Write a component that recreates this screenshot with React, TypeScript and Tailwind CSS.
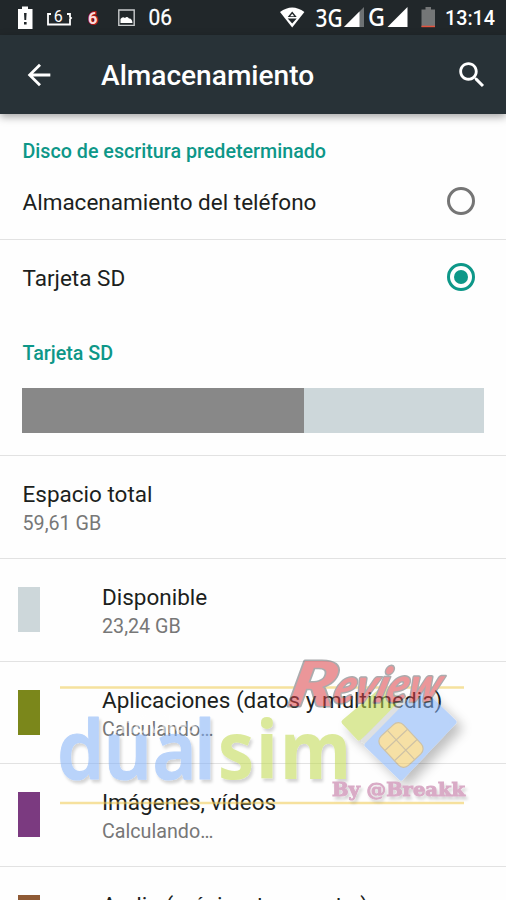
import clsx from 'clsx'

const rows = [
  { title: 'Disponible', detail: '23,24 GB', color: 'bg-[#cdd7da]' },
  { title: 'Aplicaciones (datos y multimedia)', detail: 'Calculando…', color: 'bg-[#7b871b]' },
  { title: 'Imágenes, vídeos', detail: 'Calculando…', color: 'bg-[#7b3a80]' },
  { title: 'Audio (música, tonos, etc.)', detail: 'Calculando…', color: 'bg-[#8f5a35]' },
]

function StatusBar() {
  return (
    <div className="h-[35px] bg-[#21272a] text-white">
      <svg width="506" height="35" viewBox="0 0 506 35" fill="#fff" fontFamily="Roboto, sans-serif">
        <path d="M18 9h4V6.5h6V9h4.500v20H18z" />
        <path d="M24 13h2.600l-.4 7h-1.800zM24 22h2.600v2.400H24z" fill="#21272a" />

        <path d="M51 14h-3v10.500h22V19l1-1-1-1v-3h-3" fill="none" stroke="#fff" strokeWidth="1.800" />
        <text x="53.800" y="21.500" fontSize="16">6</text>

        <text x="88" y="24" fontSize="16.500" fontWeight="700" fill="#fbdcdc" stroke="#b01818" strokeWidth="2" paintOrder="stroke">6</text>

        <path d="M118.800 10h15.400v15.400h-15.400z" fill="none" stroke="#c9cccd" strokeWidth="1.400" />
        <path d="M120.500 23v-4q2-3 4.500-1 2-2 4 .5 3-.5 3.500 4.500z" />
        <text x="148.500" y="25.400" fontSize="22" textLength="23.500" lengthAdjust="spacingAndGlyphs" stroke="#fff" strokeWidth="0.300">06</text>

        <path d="M280 12q12.200-9 24.400 0L292.200 27.400z" />
        <path d="M292.200 11.500l4.500 5.500h-9zM292.200 23.500l4.500-5h-9z" fill="#21272a" />
        <path d="M292.200 13.700l2 2.500h-4z" fill="#fff" />

        <text x="315.500" y="26.800" fontSize="24.500" fontWeight="500" fontFamily="'Noto Sans', sans-serif" textLength="27" lengthAdjust="spacingAndGlyphs">3G</text>
        <path d="M364 7v20h-20z" fill="#6d7173" />
        <path d="M359.500 11.500V27H344z" />
        <text x="368" y="26.400" fontSize="24.500" fontWeight="500" fontFamily="'Noto Sans', sans-serif" textLength="17" lengthAdjust="spacingAndGlyphs">G</text>
        <path d="M407.500 7v20h-20z" />

        <path d="M421.500 9.500h4V7h5.500v2.500h4V27h-13.500z" fill="#747677" />
        <path d="M421.500 25.700H435V27.200h-13.500z" fill="#e5533d" />
        <text x="445" y="25.400" fontSize="20" fontWeight="500" textLength="50" lengthAdjust="spacingAndGlyphs">13:14</text>
      </svg>
    </div>
  )
}

function AppBar() {
  return (
    <header className="relative z-10 flex h-[79px] items-center bg-[#283237] text-white shadow-[0_3px_8px_rgba(0,0,0,0.35)]">
      <svg className="ml-[22px] shrink-0" width="34" height="34" viewBox="0 0 24 24" fill="currentColor">
        <path d="M20 11H7.830l5.590-5.590L12 4l-8 8 8 8 1.410-1.410L7.830 13H20v-2z" />
      </svg>
      <h1 className="ml-[45px] mt-[4px] flex-1 text-[28.100px] font-medium leading-none">Almacenamiento</h1>
      <svg className="mr-[17px] shrink-0" width="34" height="34" viewBox="0 0 24 24" fill="currentColor">
        <path d="M15.500 14h-.79l-.28-.27C15.410 12.590 16 11.110 16 9.500 16 5.910 13.090 3 9.500 3S3 5.910 3 9.500 5.910 16 9.500 16c1.610 0 3.090-.59 4.230-1.570l.27.280v.79l5 4.990L20.490 19l-4.990-5zm-6 0C7.010 14 5 11.990 5 9.500S7.010 5 9.500 5 14 7.010 14 9.500 11.990 14 9.500 14z" />
      </svg>
    </header>
  )
}

function SectionTitle({ children }: { children: string }) {
  return <h2 className="px-[22.500px] text-[19.700px] font-medium leading-6 text-[#0d9788]">{children}</h2>
}

function RadioRow({ label, checked }: { label: string; checked?: boolean }) {
  return (
    <div className="flex h-[75px] items-center justify-between pb-[2px] pl-[22.500px] pr-[31px]">
      <span className="mt-[3px] text-[22.500px] leading-none">{label}</span>
      <span
        className={clsx(
          'flex size-7 items-center justify-center rounded-full border-3',
          checked ? 'border-[#0d9788]' : 'border-[#757575]'
        )}
      >
        {checked && <span className="size-3.5 rounded-full bg-[#0d9788]" />}
      </span>
    </div>
  )
}

function Watermark() {
  return (
    <svg className="absolute left-0 top-[640px]" width="506" height="180" viewBox="0 0 506 180">
      <defs>
        <filter id="soft" x="-20%" y="-20%" width="150%" height="150%">
          <feDropShadow dx="2" dy="3" stdDeviation="1.500" floodColor="#000" floodOpacity="0.300" />
        </filter>
        <filter id="card" x="-30%" y="-30%" width="170%" height="170%">
          <feDropShadow dx="6" dy="6" stdDeviation="6" floodColor="#000" floodOpacity="0.450" />
        </filter>
      </defs>
      <g opacity="0.550">
        <path d="M60 47.500h404M60 163h404" stroke="#f0cb50" strokeWidth="2.600" />

        <g filter="url(#soft)" fontFamily="'Noto Sans', sans-serif" fontWeight="700" fontSize="81" strokeLinejoin="round">
          <text x="61.300 111.500 164 209" y="139.500" transform="scale(.93 1)" fontWeight="600" fill="#81b0f8" stroke="#81b0f8" strokeWidth="1.200">dual</text>
          <text x="242 284.500 311" y="139.500" transform="scale(.9 1)" fill="#bfd94c">sim</text>
        </g>
        <text x="112" y="93" fontFamily="'Noto Sans', sans-serif" fontWeight="600" fontSize="23" fill="#fff" textLength="87" lengthAdjust="spacingAndGlyphs">móviles</text>

        <g filter="url(#card)" strokeLinejoin="round" strokeWidth="5">
          <path d="M344 82L359 98 398 60 383 49z" fill="#bfd94c" stroke="#bfd94c" />
          <path d="M362 101L400 62 406 60 366 103z" fill="#c4c8cc" stroke="#c4c8cc" strokeWidth="2" />
          <path d="M367 105L401 138 454 82 421 50z" fill="#81b0f8" stroke="#81b0f8" />
        </g>
        <g transform="translate(401 105) rotate(47)" fill="#f1c85d" stroke="#a8925e" strokeWidth="1.200">
          <rect x="-20" y="-15.500" width="40" height="31" rx="7" />
          <path d="M-20 0H20M-7-15.500v31M7-15.500v31" fill="none" />
        </g>

        <g fontFamily="Lato, sans-serif" fontStyle="italic" fontWeight="900" fill="#dc4248" stroke="#68686c" strokeWidth="3" strokeLinejoin="round" paintOrder="stroke">
          <text transform="translate(286 66) skewX(-12)" fontSize="62" textLength="47" lengthAdjust="spacingAndGlyphs">R</text>
          <text transform="translate(331 63) rotate(-1) skewX(-18)" fontSize="48" textLength="106" lengthAdjust="spacingAndGlyphs">eview</text>
        </g>
        <text x="332" y="156" fontFamily="'DejaVu Serif', serif" fontWeight="700" fontSize="18" fill="#bb6799" stroke="#bb6799" strokeWidth="1" filter="url(#soft)" textLength="133" lengthAdjust="spacingAndGlyphs">By @Breakk</text>
      </g>
    </svg>
  )
}

export default function App() {
  return (
    <main
      className="relative h-[900px] w-[506px] overflow-hidden bg-[#fefefe] text-[#1c1f20]"
      style={{ fontFamily: 'Roboto, sans-serif' }}
    >
      <StatusBar />
      <AppBar />

      <div className="pt-[26px]">
        <SectionTitle>Disco de escritura predeterminado</SectionTitle>
      </div>
      <RadioRow label="Almacenamiento del teléfono" />
      <div className="h-px bg-[#e2e2e2]" />
      <RadioRow label="Tarjeta SD" checked />

      <div className="pt-[27px]">
        <SectionTitle>Tarjeta SD</SectionTitle>
      </div>
      <div className="mx-[22px] mt-[22px] flex h-[45px] bg-[#cdd7da]">
        <div className="w-[282px] bg-[#888888]" />
      </div>

      <div className="mt-[22px] h-[103px] border-t border-[#e2e2e2] px-[22.500px] pt-[25px]">
        <p className="text-[22.500px] leading-[27px]">Espacio total</p>
        <p className="mt-[3px] text-[19.700px] leading-[26px] text-[#777777]">59,61 GB</p>
      </div>
      {rows.map((row) => (
        <div key={row.title} className="flex h-[102.700px] border-t border-[#e2e2e2] pl-[17.500px]">
          <div className={clsx('mt-[28px] h-[45px] w-[22.500px]', row.color)} />
          <div className="ml-[62px] pt-[25px]">
            <p className="text-[22.500px] leading-[27px]">{row.title}</p>
            <p className="mt-[3px] text-[19.700px] leading-[26px] text-[#777777]">{row.detail}</p>
          </div>
        </div>
      ))}

      <Watermark />
    </main>
  )
}
